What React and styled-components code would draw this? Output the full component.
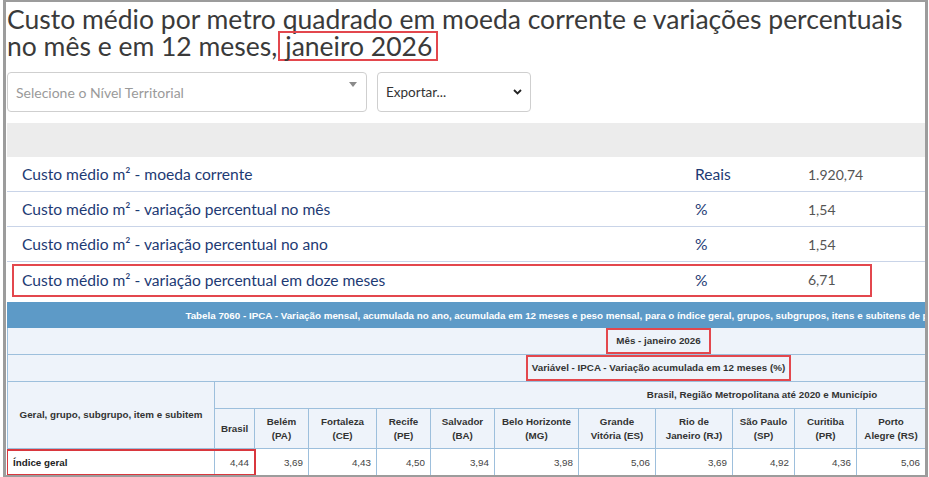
import styled, { createGlobalStyle } from "styled-components";

const GlobalStyle = createGlobalStyle`
  * {
    box-sizing: border-box;
  }

  body {
    margin: 0;
    background: #ffffff;
    font-family: Lato, "Open Sans", sans-serif;
  }
`;

const Frame = styled.div`
  width: 925px;
  height: 477px;
  margin: 0 1px 0 3px;
  border-style: solid;
  border-color: #9c9c9c;
  border-width: 2px 3px 2px 3px;
  padding-left: 1px;
  overflow: hidden;
`;

const Title = styled.h1`
  margin: 0;
  padding-top: 4px;
  font-size: 26.5px;
  line-height: 27px;
  font-weight: 400;
  color: #3a3a3a;
`;

const Marked = styled.span`
  display: inline-block;
  margin: -2px 0 -2px 1px;
  border: 2px solid #e3474d;
  padding: 0 4px 0 5px;
  line-height: 26px;
`;

const Controls = styled.div`
  display: flex;
  gap: 10px;
  margin-top: 12px;
`;

const Picker = styled.div`
  position: relative;
  display: flex;
  align-items: center;
  width: ${(p) => p.$width}px;
  height: 40px;
  padding: 0 8px;
  border: 1px solid #cfcfcf;
  border-radius: 4px;
  font-size: ${(p) => (p.$placeholder ? 14 : 13.5)}px;
  color: ${(p) => (p.$placeholder ? "#9a9a9a" : "#333333")};
  background: #ffffff;
`;

const PickerText = styled.span`
  flex: 1;
`;

const Caret = styled.svg`
  position: absolute;
  top: 9px;
  right: 9px;
`;

const Band = styled.div`
  height: 34px;
  margin-top: 11px;
  background: #ececec;
`;

const Row = styled.div`
  position: relative;
  display: grid;
  grid-template-columns: 673px 113px 1fr;
  align-items: center;
  height: 35px;
  padding-left: 15px;
  border-bottom: ${(p) => (p.$last ? "none" : "1px solid #c9d4e8")};
  font-size: 15.6px;

  ${(p) =>
    p.$highlight &&
    `
    &::after {
      content: "";
      position: absolute;
      left: 5px;
      top: 2px;
      width: 856px;
      bottom: 0;
      border: 2px solid #e3474d;
    }
  `}
`;

const Label = styled.span`
  color: #1d3a74;
`;

const Unit = styled.span`
  color: #1d3a74;
`;

const Value = styled.span`
  color: #555555;
  font-size: 14px;
`;

const TableWrap = styled.div`
  margin-top: 5px;
  width: 918px;
  overflow: hidden;
`;

const Table = styled.table`
  width: 1302px;
  table-layout: fixed;
  border-collapse: collapse;
  font-family: "Liberation Sans", Arial, sans-serif;
  font-size: 9.8px;
  color: #333333;
`;

const TitleCell = styled.th`
  height: 25px;
  padding: 0;
  background: #5d9ac7;
  color: #ffffff;
  font-weight: 700;
  white-space: nowrap;
  text-align: center;
  border: 1px solid #5d9ac7;
`;

const HeadCell = styled.th`
  height: ${(p) => p.$h || 27}px;
  padding: 0 4px;
  background: #eef3fa;
  border: 1px solid #9dbfdc;
  font-weight: 700;
  line-height: 14px;
  text-align: center;
  vertical-align: middle;
`;

const BoxedText = styled.span`
  display: inline-block;
  border: 2px solid #e3474d;
  padding: 0 ${(p) => p.$pad}px;
  line-height: 22px;
`;

const NameCell = styled.td`
  position: relative;
  height: 27px;
  padding: 0 5px;
  border: 1px solid #9dbfdc;
  font-weight: 700;
  color: #222222;

  &::after {
    content: "";
    position: absolute;
    left: -2px;
    top: 0;
    width: 246px;
    bottom: -1px;
    border: 2px solid #d9373e;
  }
`;

const NumCell = styled.td`
  padding: 0 5px;
  border: 1px solid #9dbfdc;
  text-align: right;
  color: #444444;
`;

const rows = [
  { label: "Custo médio m² - moeda corrente", unit: "Reais", value: "1.920,74" },
  { label: "Custo médio m² - variação percentual no mês", unit: "%", value: "1,54" },
  { label: "Custo médio m² - variação percentual no ano", unit: "%", value: "1,54" },
  { label: "Custo médio m² - variação percentual em doze meses", unit: "%", value: "6,71" },
];

const cities = [
  { name: ["Brasil"], width: 40, value: "4,44" },
  { name: ["Belém", "(PA)"], width: 54, value: "3,69" },
  { name: ["Fortaleza", "(CE)"], width: 68, value: "4,43" },
  { name: ["Recife", "(PE)"], width: 54, value: "4,50" },
  { name: ["Salvador", "(BA)"], width: 64, value: "3,94" },
  { name: ["Belo Horizonte", "(MG)"], width: 84, value: "3,98" },
  { name: ["Grande", "Vitória (ES)"], width: 77, value: "5,06" },
  { name: ["Rio de", "Janeiro (RJ)"], width: 77, value: "3,69" },
  { name: ["São Paulo", "(SP)"], width: 62, value: "4,92" },
  { name: ["Curitiba", "(PR)"], width: 62, value: "4,36" },
  { name: ["Porto", "Alegre (RS)"], width: 69, value: "5,06" },
  { name: ["Campo", "Grande (MS)"], width: 70, value: "4,12" },
  { name: ["Rio Branco", "(AC)"], width: 62, value: "4,78" },
  { name: ["São Luís", "(MA)"], width: 58, value: "4,05" },
  { name: ["Aracaju", "(SE)"], width: 58, value: "4,61" },
  { name: ["Goiânia", "(GO)"], width: 62, value: "4,88" },
  { name: ["Brasília", "(DF)"], width: 74, value: "4,27" },
];

const App = () => {
  return (
    <>
      <GlobalStyle />
      <Frame>
        <Title>
          Custo médio por metro quadrado em moeda corrente e variações percentuais no mês e em
          12 meses,<Marked>janeiro 2026</Marked>
        </Title>

        <Controls>
          <Picker $width={360} $placeholder>
            <PickerText>Selecione o Nível Territorial</PickerText>
            <Caret width="8" height="6" viewBox="0 0 8 6">
              <path d="M0 0 L8 0 L4 5 Z" fill="#8a8a8a" />
            </Caret>
          </Picker>
          <Picker $width={154}>
            <PickerText>Exportar...</PickerText>
            <svg width="9" height="6" viewBox="0 0 9 6">
              <path d="M1 1 L4.5 4.5 L8 1" fill="none" stroke="#222" strokeWidth="1.8" />
            </svg>
          </Picker>
        </Controls>

        <Band />

        {rows.map((r, i) => (
          <Row key={r.label} $highlight={i === 3} $last={i === 3}>
            <Label>{r.label}</Label>
            <Unit>{r.unit}</Unit>
            <Value>{r.value}</Value>
          </Row>
        ))}

        <TableWrap>
          <Table>
            <colgroup>
              <col style={{ width: 207 }} />
              {cities.map((c) => (
                <col key={c.name.join(" ")} style={{ width: c.width }} />
              ))}
            </colgroup>
            <thead>
              <tr>
                <TitleCell colSpan={cities.length + 1}>
                  Tabela 7060 - IPCA - Variação mensal, acumulada no ano, acumulada em 12 meses e
                  peso mensal, para o índice geral, grupos, subgrupos, itens e subitens de
                  produtos e serviços (a partir de janeiro/2020)
                </TitleCell>
              </tr>
              <tr>
                <HeadCell colSpan={cities.length + 1} style={{ padding: 0 }}>
                  <BoxedText $pad={8}>Mês - janeiro 2026</BoxedText>
                </HeadCell>
              </tr>
              <tr>
                <HeadCell colSpan={cities.length + 1} style={{ padding: 0 }}>
                  <BoxedText $pad={4}>Variável - IPCA - Variação acumulada em 12 meses (%)</BoxedText>
                </HeadCell>
              </tr>
              <tr>
                <HeadCell rowSpan={2}>Geral, grupo, subgrupo, item e subitem</HeadCell>
                <HeadCell colSpan={cities.length}>
                  Brasil, Região Metropolitana até 2020 e Município
                </HeadCell>
              </tr>
              <tr>
                {cities.map((c) => (
                  <HeadCell key={c.name.join(" ")} $h={40}>
                    {c.name[0]}
                    {c.name[1] && <br />}
                    {c.name[1]}
                  </HeadCell>
                ))}
              </tr>
            </thead>
            <tbody>
              <tr>
                <NameCell>Índice geral</NameCell>
                {cities.map((c) => (
                  <NumCell key={c.name.join(" ")}>{c.value}</NumCell>
                ))}
              </tr>
            </tbody>
          </Table>
        </TableWrap>
      </Frame>
    </>
  );
};

export default App;
